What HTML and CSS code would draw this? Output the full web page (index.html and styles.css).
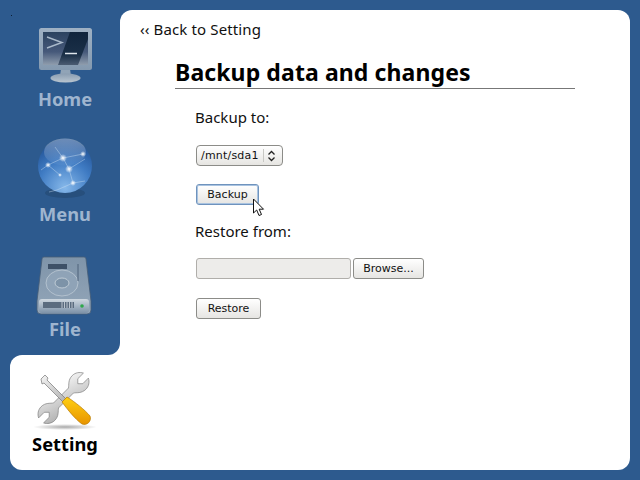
FILE: index.html
```html
<!DOCTYPE html>
<html lang="en">
<head>
    <meta charset="UTF-8">
    <title>Setting</title>
    <link rel="stylesheet" href="styles.css">
</head>
<body>
    <i class="speck"></i>

    <div class="shell">
        <nav class="side">
            <a class="tab" href="#">
                <svg class="tab-icon" viewBox="0 0 64 64">
                    <defs>
                        <linearGradient id="frame" x1="0" y1="0" x2="0" y2="1">
                            <stop offset="0" stop-color="#9fb1c4"/>
                            <stop offset="1" stop-color="#8499af"/>
                        </linearGradient>
                        <linearGradient id="screen" x1="0" y1="0" x2="0" y2="1">
                            <stop offset="0" stop-color="#2b425f"/>
                            <stop offset="0.6" stop-color="#46597a"/>
                            <stop offset="1" stop-color="#8f9dad"/>
                        </linearGradient>
                        <linearGradient id="slash" x1="0" y1="0" x2="0" y2="1">
                            <stop offset="0" stop-color="#10243c"/>
                            <stop offset="0.7" stop-color="#1b3048"/>
                            <stop offset="1" stop-color="#4b5c72"/>
                        </linearGradient>
                        <linearGradient id="stand" x1="0" y1="0" x2="0" y2="1">
                            <stop offset="0" stop-color="#8a9db1"/>
                            <stop offset="1" stop-color="#b9c5d0"/>
                        </linearGradient>
                    </defs>
                    <path d="M28 47h9l1 7H27z" fill="#91a4b7"/>
                    <ellipse cx="32.500" cy="56" rx="15" ry="4.500" fill="url(#stand)"/>
                    <rect x="6" y="6" width="53" height="42" rx="2.500" fill="url(#frame)"/>
                    <rect x="10" y="10" width="45" height="33" fill="url(#screen)"/>
                    <path d="M37 10h18v7L45 43H25z" fill="url(#slash)"/>
                    <path d="M14 15l15 5.500-15 5.500" fill="none" stroke="#a9b9ca" stroke-width="1.400"/>
                    <path d="M32 31.500h12" stroke="#dfe6ed" stroke-width="1.500"/>
                </svg>
                <span>Home</span>
            </a>
            <a class="tab" href="#">
                <svg class="tab-icon" viewBox="0 0 64 64">
                    <defs>
                        <radialGradient id="globe" cx="0.500" cy="0.900" r="0.900">
                            <stop offset="0" stop-color="#86b8ea"/>
                            <stop offset="0.550" stop-color="#3f7bc3"/>
                            <stop offset="1" stop-color="#1f4f92"/>
                        </radialGradient>
                        <linearGradient id="shine" x1="0" y1="0" x2="0" y2="1">
                            <stop offset="0" stop-color="#fff" stop-opacity="0.350"/>
                            <stop offset="1" stop-color="#fff" stop-opacity="0.030"/>
                        </linearGradient>
                        <radialGradient id="node">
                            <stop offset="0" stop-color="#fff"/>
                            <stop offset="1" stop-color="#fff" stop-opacity="0"/>
                        </radialGradient>
                    </defs>
                    <ellipse cx="32" cy="56" rx="20" ry="5" fill="#274f7c"/>
                    <circle cx="32" cy="29" r="27" fill="url(#globe)"/>
                    <ellipse cx="32" cy="15" rx="21" ry="13.500" fill="url(#shine)"/>
                    <path d="M22 10l8 11 20-4M30 21l-15 7-7 5M30 21l6 11 4 14-16 7-8 2M36 32l16-10M40 46l12-2M15 28l12 10" fill="none" stroke="#cfe1f3" stroke-width="0.700" opacity="0.600"/>
                    <g fill="url(#node)">
                        <circle cx="30" cy="21" r="4"/>
                        <circle cx="50" cy="17" r="3"/>
                        <circle cx="36" cy="32" r="4"/>
                        <circle cx="15" cy="28" r="3"/>
                        <circle cx="40" cy="46" r="3"/>
                        <circle cx="27" cy="38" r="2"/>
                    </g>
                </svg>
                <span>Menu</span>
            </a>
            <a class="tab tab-last" href="#">
                <svg class="tab-icon" viewBox="0 0 64 64">
                    <defs>
                        <linearGradient id="disk" x1="0" y1="0" x2="0" y2="1">
                            <stop offset="0" stop-color="#7f94a9"/>
                            <stop offset="1" stop-color="#93a6b9"/>
                        </linearGradient>
                        <linearGradient id="front" x1="0" y1="0" x2="0" y2="1">
                            <stop offset="0" stop-color="#cfd8e0"/>
                            <stop offset="1" stop-color="#7d92a8"/>
                        </linearGradient>
                    </defs>
                    <path d="M11 5h40q2 0 2 2l5 42v9q0 4-4 4H8q-4 0-4-4v-9L9 7q0-2 2-2z" fill="url(#disk)" stroke="#465d76" stroke-width="0.800"/>
                    <rect x="15" y="12" width="19" height="5" fill="#3d5067"/>
                    <ellipse cx="29" cy="31" rx="16" ry="13" fill="#8fa3b7" stroke="#b3c1ce"/>
                    <ellipse cx="29" cy="31" rx="7" ry="5" fill="#7d93a8" stroke="#c0ccd6"/>
                    <path d="M45 12v17" stroke="#4e627a"/>
                    <rect x="6" y="47" width="50" height="14" rx="3" fill="url(#front)"/>
                    <rect x="10" y="50" width="31" height="6" fill="#5b6c7f"/>
                    <path d="M29 50v6M31.500 50v6M34 50v6M36.500 50v6M39 50v6" stroke="#d4dbe2" stroke-width="0.800"/>
                    <circle cx="49" cy="54" r="1.800" fill="#2ea84a"/>
                </svg>
                <span>File</span>
            </a>
            <a class="tab tab-active" href="#">
                <svg class="tab-icon" viewBox="0 0 64 64">
                    <defs>
                        <linearGradient id="steel" x1="0" y1="0" x2="1" y2="1">
                            <stop offset="0" stop-color="#f4f4f4"/>
                            <stop offset="1" stop-color="#b0b0b0"/>
                        </linearGradient>
                        <linearGradient id="grip" x1="0" y1="0" x2="0" y2="1">
                            <stop offset="0" stop-color="#ffd012"/>
                            <stop offset="1" stop-color="#e89400"/>
                        </linearGradient>
                        <radialGradient id="floor">
                            <stop offset="0" stop-color="#aaa"/>
                            <stop offset="1" stop-color="#fff"/>
                        </radialGradient>
                    </defs>
                    <ellipse cx="32" cy="60" rx="32" ry="3" fill="url(#floor)"/>
                    <path transform="translate(30.500 31) rotate(45) scale(0.880)" d="M-4-12C-6-15-11-18-11-25C-11-30-8-34-4-36L-4-27L0-23L4-27L4-36C8-34 11-30 11-25C11-18 6-15 4-12L4 12C6 15 11 18 11 25C11 30 8 34 4 36L4 27L0 23L-4 27L-4 36C-8 34-11 30-11 25C-11 18-6 15-4 12Z" fill="url(#steel)" stroke="#777" stroke-width="0.700"/>
                    <path d="M8 12l4-4 3 3-1 2 19 19-3 3-19-19-2 1z" fill="url(#steel)" stroke="#777" stroke-width="0.700"/>
                    <path d="M29 35l5-5c8 5 18 13 23 19 2 5-3 10-8 8-7-5-14-14-20-22z" fill="url(#grip)" stroke="#b87a00" stroke-width="0.700"/>
                </svg>
                <span>Setting</span>
            </a>
        </nav>

        <main class="panel">
            <a class="back" href="#">‹‹ Back to Setting</a>
            <section class="content">
                <h1>Backup data and changes</h1>
                <form class="form">
                    <p>Backup to:</p>
                    <div class="select">
                        <span class="select-value">/mnt/sda1</span>
                        <svg width="9" height="12" viewBox="0 0 9 12"><path d="M1.500 4.500l3-3 3 3M1.500 7.500l3 3 3-3" fill="none" stroke="#222" stroke-width="1.300"/></svg>
                    </div>
                    <button class="btn btn-focus" type="button">Backup</button>
                    <p class="restore-label">Restore from:</p>
                    <div class="file-row">
                        <div class="file-name"></div>
                        <button class="btn btn-browse" type="button">Browse...</button>
                    </div>
                    <button class="btn btn-restore" type="button">Restore</button>
                </form>
            </section>
        </main>
    </div>

    <svg class="cursor" width="13" height="20" viewBox="0 0 13 20">
        <path d="M1.500 1v14l3.200-3 2.300 5.500 2.500-1-2.300-5.300h4.300z" fill="#fff" stroke="#111"/>
    </svg>
</body>
</html>
```

FILE: styles.css
```css
html, body {
    height: 100%;
}

body {
    margin: 0;
    background-color: #2d5a8e;
    font-family: "Noto Sans", "Open Sans", sans-serif;
    color: #111;
    overflow: hidden;
}

a {
    text-decoration: none;
}

.speck {
    position: absolute;
    left: 11px;
    top: 15px;
    width: 1px;
    height: 1px;
    background-color: #0b1d33;
}

.shell {
    display: flex;
    height: 460px;
    padding: 10px;
}

/* side tabs */
.side {
    display: flex;
    flex-direction: column;
    width: 110px;
    background: linear-gradient(to right, #2d5a8e 98px, white 98px);
}

.tab {
    display: flex;
    flex-direction: column;
    align-items: center;
    height: 103px;
    padding-top: 12px;
    background-color: #2d5a8e;
    color: #9fb5cf;
    font-size: 18.300px;
    font-weight: bold;
    line-height: 26px;
}

.tab-icon {
    width: 64px;
    height: 64px;
}

.tab-last {
    border-bottom-right-radius: 12px;
}

.tab-active {
    background-color: white;
    color: black;
    border-radius: 12px 0 0 12px;
}

/* main panel */
.panel {
    flex: 1;
    background-color: white;
    border-radius: 12px 12px 12px 0;
    padding: 8px 20px;
}

.back {
    display: block;
    color: #111;
    font-size: 15px;
    letter-spacing: 0.130px;
    line-height: 22px;
}

.content {
    width: 400px;
    margin: 17px 0 0 35px;
}

h1 {
    margin: 0;
    border-bottom: 1px solid #777;
    font-size: 23px;
    letter-spacing: 0.100px;
    line-height: 31px;
    color: black;
}

.form {
    padding: 17px 0 0 20px;
}

.form p {
    margin: 0;
    font-size: 15px;
    line-height: 22px;
}

.restore-label {
    margin-top: 15px !important;
}

.btn {
    display: block;
    height: 21px;
    padding: 0;
    border: 1px solid #8c8c88;
    border-radius: 3px;
    background: linear-gradient(#fff, #e6e5e2);
    font-family: "DejaVu Sans", sans-serif;
    font-size: 11px;
    color: #111;
}

.btn-focus {
    width: 63px;
    margin: 18px 0 0 1px;
    border-color: #6f93bd;
    box-shadow: inset 0 0 0 1px #a9c3e0;
}

.btn-browse {
    width: 71px;
}

.btn-restore {
    width: 65px;
    margin-left: 1px;
}

.select {
    display: flex;
    align-items: center;
    justify-content: space-between;
    box-sizing: border-box;
    width: 87px;
    height: 21px;
    margin: 17px 0 0 1px;
    padding: 0 6px 0 4px;
    border: 1px solid #8c8c88;
    border-radius: 4px;
    background: linear-gradient(#fff, #e6e5e2);
    font-family: "DejaVu Sans", sans-serif;
    font-size: 11px;
    letter-spacing: 0.200px;
}

.select-value {
    padding-right: 4px;
    border-right: 1px solid #c8c8c4;
}

.file-row {
    display: flex;
    gap: 2px;
    margin: 16px 0 19px 1px;
}

.file-name {
    box-sizing: border-box;
    width: 155px;
    height: 21px;
    border: 1px solid #b0aeaa;
    border-radius: 3px;
    background-color: #edecea;
}

.cursor {
    position: absolute;
    left: 252px;
    top: 198px;
}
```
